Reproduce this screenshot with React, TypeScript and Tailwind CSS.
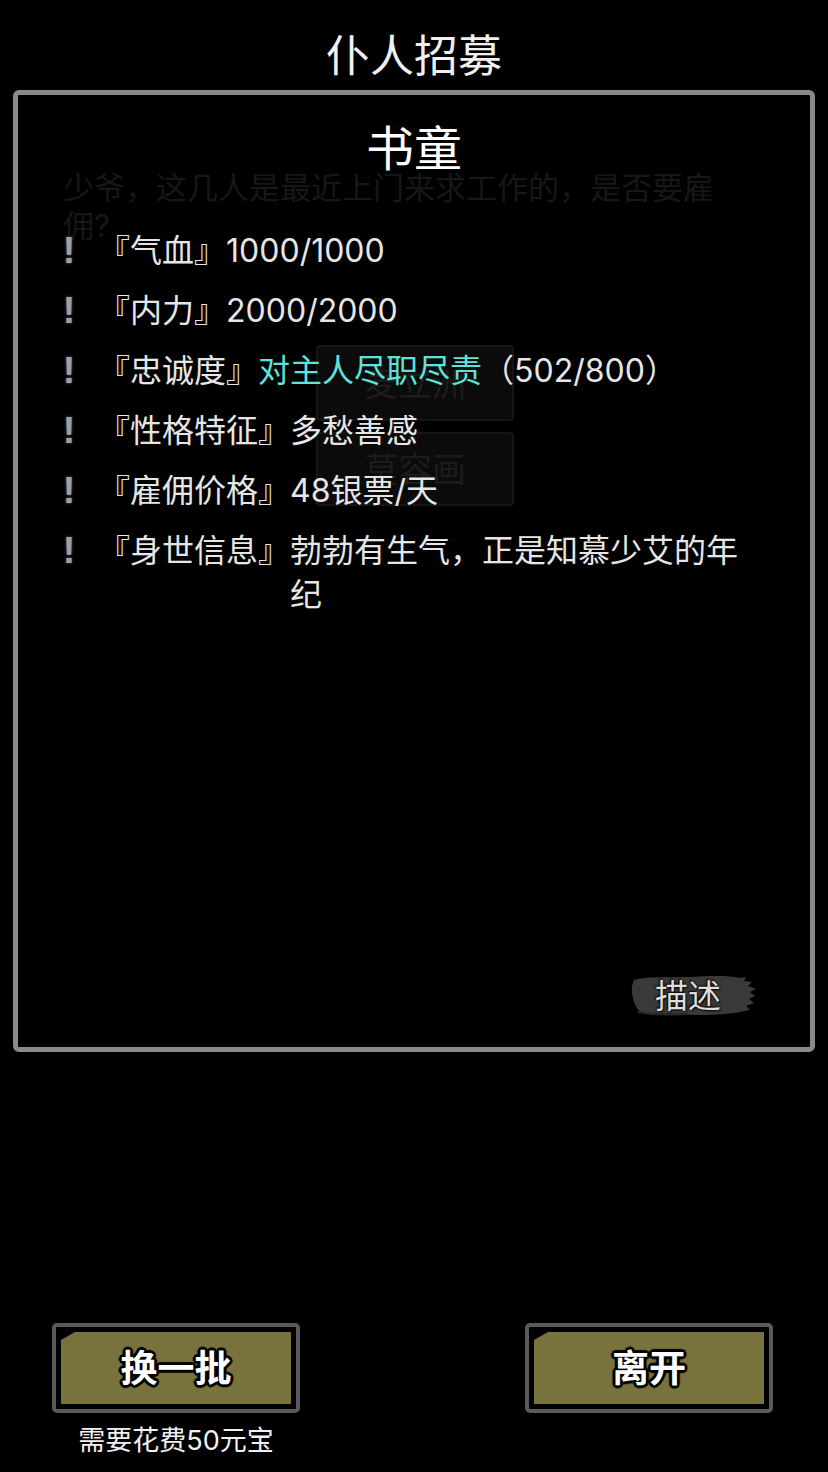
import React from "react";

const font = "font-['Inter','Noto_Sans_CJK_SC','Noto_Sans',sans-serif]";

function Row({ label, children }: { label: string; children: React.ReactNode }) {
  return (
    <div className="flex items-start text-[32px] leading-[44px] text-[#e6e6e6]">
      <span className="w-[38px] shrink-0 text-[#a0a0a0] font-semibold text-[36px] leading-[44px] font-['Liberation_Sans',sans-serif] [text-shadow:0_0_3px_#555,0_0_1px_#777]">!</span>
      <span className="shrink-0 -ml-[3px]">『{label}』</span>
      <span className="flex-1">{children}</span>
    </div>
  );
}

function Btn({ label }: { label: string }) {
  return (
    <div className="w-[248px] h-[90px] border-[4px] border-[#5a5a5a] rounded-[5px] bg-black p-[5px]">
      <div className="h-full w-full bg-[#78733d] [clip-path:polygon(0_8px,14px_0,100%_0,100%_100%,0_100%)] flex items-center justify-center">
        <span className="text-[37px] font-bold text-white leading-none [text-shadow:2px_0_0_#000,-2px_0_0_#000,0_2px_0_#000,0_-2px_0_#000,2px_2px_0_#000,-2px_-2px_0_#000,2px_-2px_0_#000,-2px_2px_0_#000,3px_0_1px_#000,-3px_0_1px_#000,0_3px_1px_#000,0_-3px_1px_#000]">
          {label}
        </span>
      </div>
    </div>
  );
}

export default function App() {
  return (
    <div className={`w-[828px] h-[1472px] bg-black flex flex-col items-center ${font}`}>
      <h1 className="pt-[32px] h-[90px] text-[44px] leading-[48px] text-[#f0f0f0] font-normal">仆人招募</h1>
      <div className="relative w-[802px] h-[962px] border-[5px] border-[#8a8a8a] rounded-[6px] bg-black">
        {/* ghost layer beneath */}
        <div className="absolute left-[45px] top-[74px] w-[690px] text-[31px] leading-[38px] text-[#171717]">
          少爷，这几人是最近上门来求工作的，是否要雇佣?
        </div>
        <div className="absolute left-[298px] top-[250px] w-[198px] h-[76px] border-[2px] border-[#151515] rounded-[4px] bg-[#0b0b0b] flex items-center justify-center text-[34px] text-[#1c1c1c]">
          麦立洲
        </div>
        <div className="absolute left-[298px] top-[337px] w-[198px] h-[74px] border-[2px] border-[#151515] rounded-[4px] bg-[#0b0b0b] flex items-center justify-center text-[34px] text-[#1c1c1c]">
          莫容画
        </div>

        <div className="relative flex flex-col h-full">
          <div className="pt-[30px] text-center text-[48px] leading-[48px] text-white">书童</div>
          <div className="mt-[56px] pl-[45px] pr-[55px] flex flex-col gap-[16px]">
            <Row label="气血">1000/1000</Row>
            <Row label="内力">2000/2000</Row>
            <Row label="忠诚度">
              <span className="text-[#5ee2d9]">对主人尽职尽责</span>（502/800）
            </Row>
            <Row label="性格特征">多愁善感</Row>
            <Row label="雇佣价格">48银票/天</Row>
            <Row label="身世信息">勃勃有生气，正是知慕少艾的年纪</Row>
          </div>
          <div className="flex-1" />
          <div className="flex justify-end pr-[50px] pb-[27px]">
            <div className="relative w-[132px] h-[48px] flex items-center justify-center">
              <svg className="absolute inset-0" width="132" height="48" viewBox="0 0 132 48">
                <path
                  d="M6 8 C20 4 40 6 60 5 C80 4 100 3 112 6 L118 5 L116 9 L124 10 L120 14 L128 17 L122 20 L127 24 L121 27 L126 31 L118 34 L122 38 L112 40 C96 43 70 44 50 42 C34 41 20 43 12 40 C6 34 3 22 4 14 Z"
                  fill="#3a3a3a"
                />
                <path d="M10 40 C20 42 40 43 60 42" stroke="#2a2a2a" strokeWidth="2" fill="none" />
              </svg>
              <span className="relative text-[33px] leading-none text-[#dedede] pr-[12px] [text-shadow:1px_1px_2px_#000,-1px_-1px_2px_#000]">描述</span>
            </div>
          </div>
        </div>
      </div>

      <div className="mt-[271px] w-full flex justify-between pl-[52px] pr-[55px]">
        <div className="flex flex-col items-center">
          <Btn label="换一批" />
          <div className="mt-[12px] text-[27px] leading-[32px] text-[#f0f0f0]">需要花费50元宝</div>
        </div>
        <Btn label="离开" />
      </div>
    </div>
  );
}
